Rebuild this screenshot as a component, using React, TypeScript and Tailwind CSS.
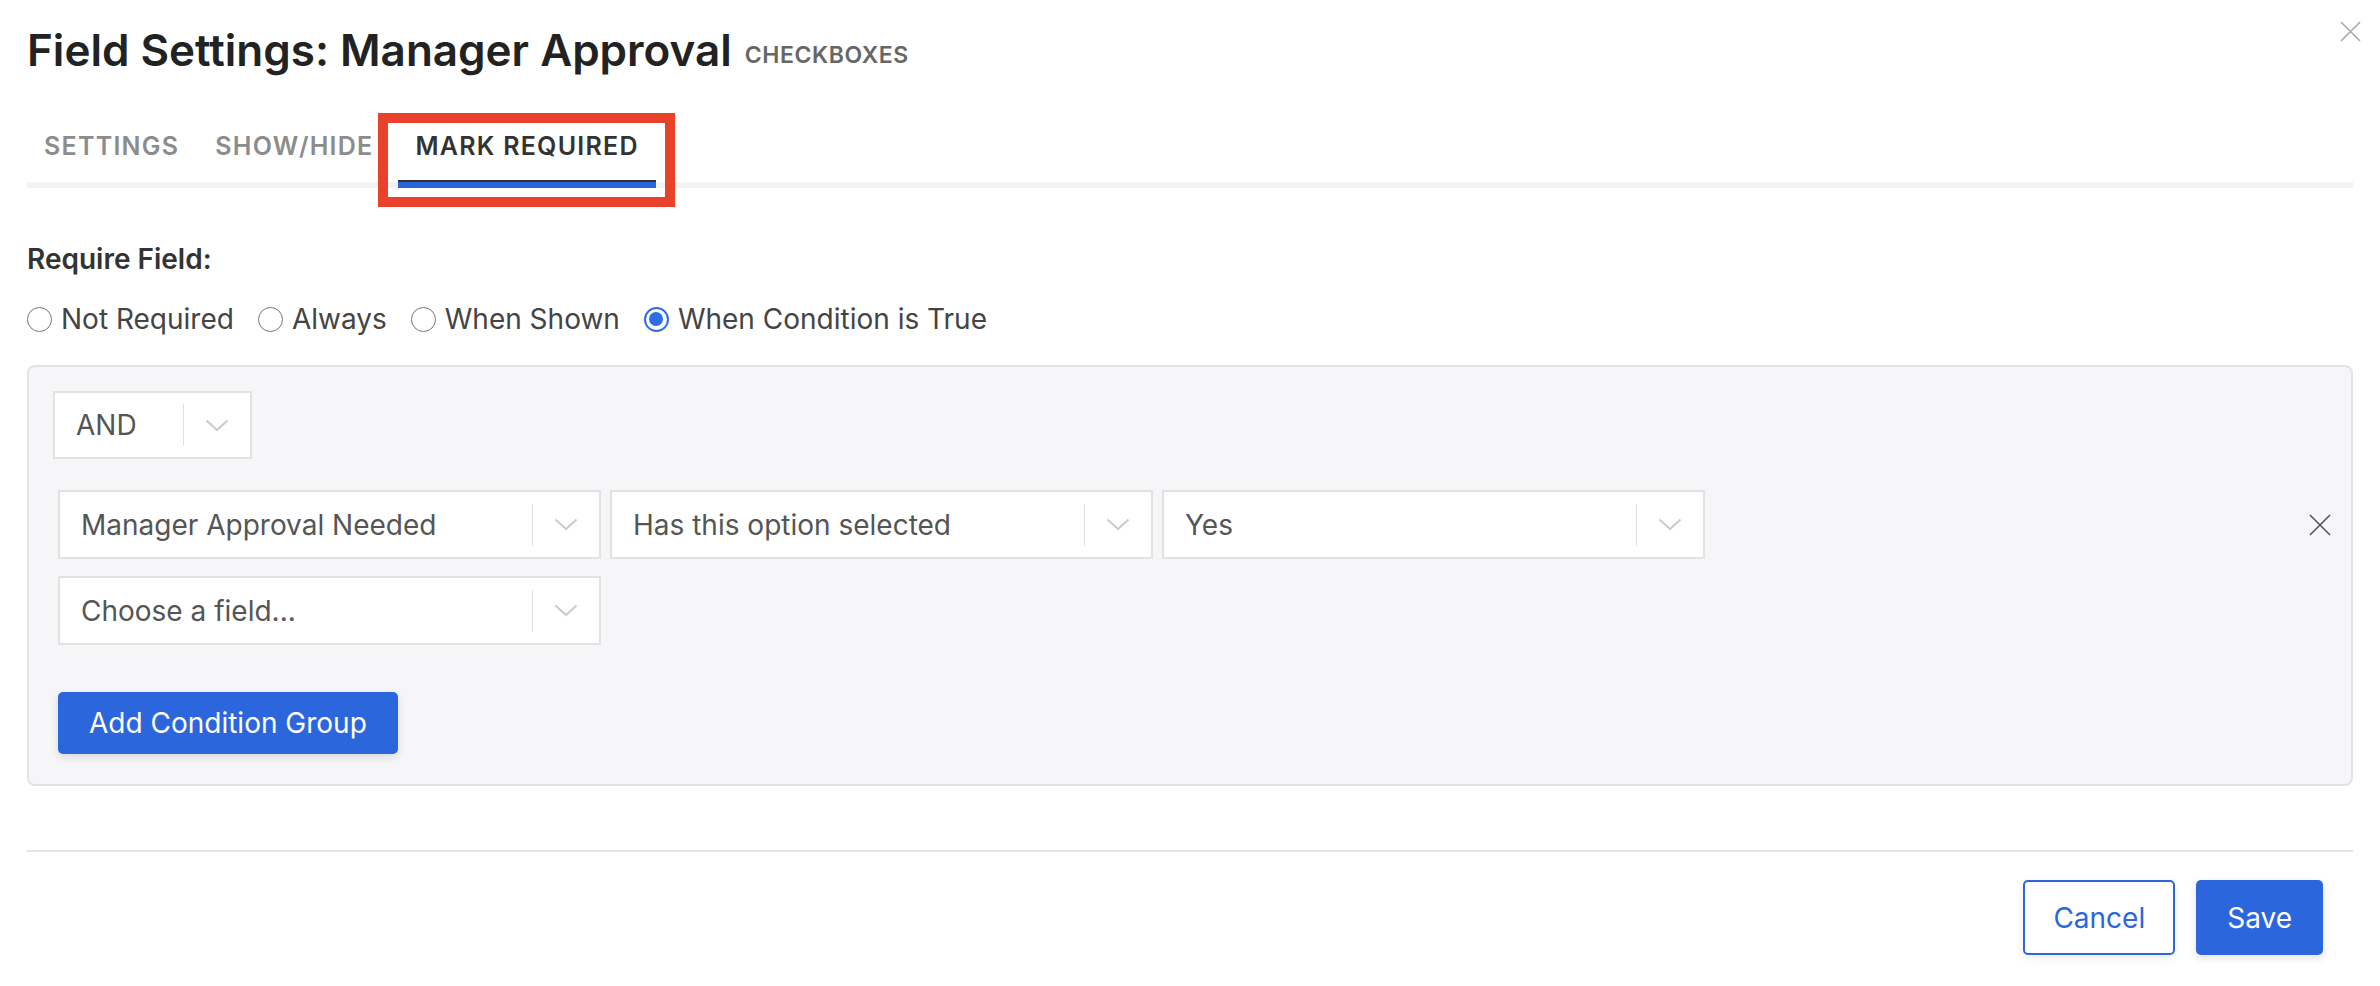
import React from "react";

function Chevron() {
    return (
        <svg width="24" height="13" viewBox="0 0 24 13" fill="none">
            <polyline points="1.5,1.5 12,11 22.5,1.5" stroke="#cccccc" strokeWidth="2.2" />
        </svg>
    );
}

function CloseIcon({ size, color }: { size: number; color: string }) {
    return (
        <svg width={size} height={size} viewBox="0 0 22 22" fill="none">
            <path d="M1 1L21 21M21 1L1 21" stroke={color} strokeWidth="1.6" />
        </svg>
    );
}

function Select({ value, width }: { value: string; width: string }) {
    return (
        <div className={`flex items-center border-2 border-[#e2e2e2] bg-white ${width}`}>
            <span className="flex-1 truncate pl-[21px] text-[28px] leading-[32px] text-[#555]">{value}</span>
            <span className="h-[42px] w-[1.5px] bg-[#e0e0e0]" />
            <span className="flex w-[66px] justify-center">
                <Chevron />
            </span>
        </div>
    );
}

function Radio({ label, checked }: { label: string; checked?: boolean }) {
    return (
        <label className="flex items-center gap-[9px]">
            {checked ? (
                <span className="flex h-[25px] w-[25px] items-center justify-center rounded-full border-2 border-[#2d6de6] bg-white">
                    <span className="h-[14px] w-[14px] rounded-full bg-[#2d6de6]" />
                </span>
            ) : (
                <span className="h-[25px] w-[25px] rounded-full border-[1.5px] border-[#777] bg-white" />
            )}
            <span className="text-[28px] leading-[32px] text-[#444]">{label}</span>
        </label>
    );
}

export default function App() {
    const tabs = [
        { label: "SETTINGS", space: "" },
        { label: "SHOW/HIDE", space: "ml-[2px]" },
        { label: "MARK REQUIRED", space: "ml-[8px]" },
    ];

    return (
        <div className="min-h-screen bg-white px-[27px] pt-[24px] font-['Inter','Noto_Sans',sans-serif]">
            {/* Header */}
            <div className="flex items-start justify-between">
                <div className="flex items-center">
                    <h1 className="text-[44px] font-semibold leading-[52px] text-[#222]">
                        Field Settings: Manager Approval
                    </h1>
                    <span className="ml-[13px] mt-[10px] text-[23px] font-semibold leading-[26px] tracking-wide text-[#666]">
                        CHECKBOXES
                    </span>
                </div>
                <button className="-mr-[8px] -mt-[3px]">
                    <CloseIcon size={21} color="#a8a8a8" />
                </button>
            </div>

            {/* Tabs */}
            <div className="mt-[55px] flex border-b-[6px] border-[#f3f3f3]">
                {tabs.map((t) => {
                    const active = t.label === "MARK REQUIRED";
                    return (
                        <div key={t.label} className={`relative -mb-[6px] flex flex-col ${t.space}`}>
                            <span
                                className={
                                    active
                                        ? "px-[17px] text-[25px] font-semibold leading-[30px] tracking-wider text-[#333]"
                                        : "px-[17px] text-[25px] font-semibold leading-[30px] tracking-wider text-[#8c8c8c]"
                                }
                            >
                                {t.label}
                            </span>
                            <div className="mt-[19px] h-[8px]">
                                {active && (
                                    <>
                                        <div className="h-[2px] bg-[#333]" />
                                        <div className="h-[6px] bg-[#2b65d9]" />
                                    </>
                                )}
                            </div>
                            {active && (
                                <span className="pointer-events-none absolute -bottom-[19px] -left-[20px] -right-[19px] -top-[18px] border-[10px] border-[#e9412b]" />
                            )}
                        </div>
                    );
                })}
            </div>

            {/* Require field */}
            <div className="mt-[55px] text-[28px] font-semibold leading-[32px] text-[#333]">Require Field:</div>
            <div className="mt-[28px] flex items-center gap-[24px]">
                <Radio label="Not Required" />
                <Radio label="Always" />
                <Radio label="When Shown" />
                <Radio label="When Condition is True" checked />
            </div>

            {/* Conditions */}
            <div className="mt-[30px] rounded-[8px] border-2 border-[#e3e3e3] bg-[#f6f6f8] p-[24px] pb-[30px]">
                <Select value="AND" width="w-[199px] h-[68px]" />
                <div className="mt-[31px] pl-[5px]">
                    <div className="flex items-center gap-[9px]">
                        <Select value="Manager Approval Needed" width="w-[543px] h-[69px]" />
                        <Select value="Has this option selected" width="w-[543px] h-[69px]" />
                        <Select value="Yes" width="w-[543px] h-[69px]" />
                        <button className="-mr-[4px] ml-auto">
                            <CloseIcon size={22} color="#555" />
                        </button>
                    </div>
                    <div className="mt-[17px]">
                        <Select value="Choose a field..." width="w-[543px] h-[69px]" />
                    </div>
                    <button className="mt-[47px] rounded-[5px] bg-[#2c66dd] px-[31px] py-[15px] text-[28px] leading-[32px] text-white shadow-[0_3px_8px_rgba(0,0,0,0.12)]">
                        Add Condition Group
                    </button>
                </div>
            </div>

            {/* Footer */}
            <div className="mt-[64px] h-[2px] bg-[#e2e2e2]" />
            <div className="mt-[28px] flex justify-end gap-[21px] pr-[30px]">
                <button className="h-[75px] rounded-[5px] border-2 border-[#2c66dd] bg-white px-[28px] text-[28px] text-[#2c66dd] shadow-[0_3px_8px_rgba(0,0,0,0.08)]">
                    Cancel
                </button>
                <button className="h-[75px] rounded-[5px] bg-[#2c66dd] px-[31px] text-[28px] text-white shadow-[0_3px_8px_rgba(0,0,0,0.12)]">
                    Save
                </button>
            </div>
        </div>
    );
}
